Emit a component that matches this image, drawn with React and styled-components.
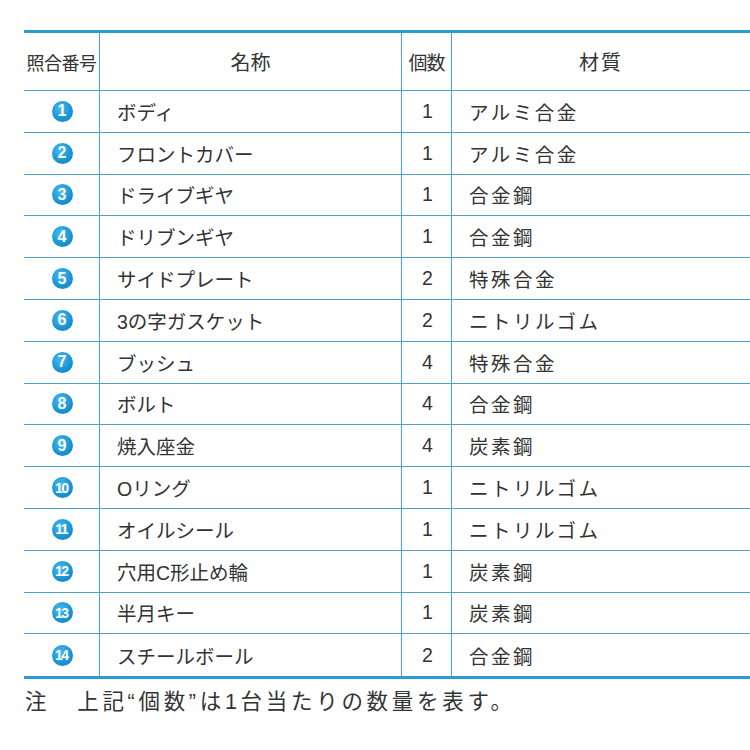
import React from "react";
import styled, { createGlobalStyle } from "styled-components";

const Global = createGlobalStyle`
  html, body {
    margin: 0;
    padding: 0;
    background: #fff;
    overflow: hidden;
  }
  body {
    font-family: "Liberation Sans", "Noto Sans CJK JP", sans-serif;
    color: #333;
  }
`;

const Page = styled.div`
  width: 750px;
  height: 750px;
  padding: 30px 0 0 24px;
  box-sizing: border-box;
`;

const Table = styled.div`
  display: grid;
  grid-template-columns: 75px 302px 50px 1fr;
  grid-auto-rows: 41.8px;
  grid-template-rows: 58px;
  border-top: 3px solid #2b9ccb;
  border-bottom: 3px solid #2b9ccb;
  width: 726px;
`;

const Cell = styled.div`
  display: flex;
  align-items: center;
  justify-content: ${(p) => (p.$left ? "flex-start" : "center")};
  padding-left: ${(p) => (p.$left ? "17px" : "0")};
  border-left: ${(p) => (p.$first ? "none" : "1.5px solid #45a7cf")};
  border-bottom: ${(p) => (p.$last ? "none" : "1.5px solid #4aa0c6")};
  box-sizing: border-box;
  font-size: 19.5px;
  letter-spacing: ${(p) => p.$spacing || "0"};
  white-space: nowrap;
  overflow: hidden;
`;

const HeadCell = styled(Cell)`
  font-size: ${(p) => p.$size || "20px"};
  letter-spacing: ${(p) => p.$spacing || "0"};
`;

const Badge = styled.span`
  flex: 0 0 21px;
  display: flex;
  align-items: center;
  justify-content: center;
  width: 21px;
  height: 21px;
  border-radius: 50%;
  background: radial-gradient(circle at 40% 35%, #45bbee 0%, #1792d2 60%, #0e7cbc 100%);
  color: #fff;
  font-family: "Liberation Sans", sans-serif;
  font-weight: bold;
  font-size: ${(p) => (p.$wide ? "14px" : "16px")};
  letter-spacing: ${(p) => (p.$wide ? "-1.5px" : "0")};
  text-indent: ${(p) => (p.$wide ? "-1.5px" : "0")};
  line-height: 1;
  margin-left: 1px;
`;

const Note = styled.div`
  margin-top: 5px;
  font-size: 21.5px;
  letter-spacing: 3.7px;
  font-family: "Liberation Sans", "Noto Sans CJK JP", sans-serif;
  display: flex;
  gap: 27px;
  padding-left: 1px;
`;

const rows = [
  ["ボディ", "1", "アルミ合金"],
  ["フロントカバー", "1", "アルミ合金"],
  ["ドライブギヤ", "1", "合金鋼"],
  ["ドリブンギヤ", "1", "合金鋼"],
  ["サイドプレート", "2", "特殊合金"],
  ["3の字ガスケット", "2", "ニトリルゴム"],
  ["ブッシュ", "4", "特殊合金"],
  ["ボルト", "4", "合金鋼"],
  ["焼入座金", "4", "炭素鋼"],
  ["Oリング", "1", "ニトリルゴム"],
  ["オイルシール", "1", "ニトリルゴム"],
  ["穴用C形止め輪", "1", "炭素鋼"],
  ["半月キー", "1", "炭素鋼"],
  ["スチールボール", "2", "合金鋼"],
];

export default function App() {
  return (
    <Page>
      <Global />
      <Table>
        <HeadCell $first $size="18px" $spacing="-0.5px">照合番号</HeadCell>
        <HeadCell>名称</HeadCell>
        <HeadCell $size="19px" $spacing="-1px">個数</HeadCell>
        <HeadCell $spacing="2px">材質</HeadCell>
        {rows.map(([name, qty, mat], i) => {
          const last = i === rows.length - 1;
          return (
            <React.Fragment key={i}>
              <Cell $first $last={last}>
                <Badge $wide={i >= 9}>{i + 1}</Badge>
              </Cell>
              <Cell $left $last={last}>{name}</Cell>
              <Cell $last={last} style={{ paddingLeft: "2px" }}>{qty}</Cell>
              <Cell $left $last={last} $spacing="2.5px">{mat}</Cell>
            </React.Fragment>
          );
        })}
      </Table>
      <Note>
        <span>注</span>
        <span>上記“個数”は1台当たりの数量を表す。</span>
      </Note>
    </Page>
  );
}
